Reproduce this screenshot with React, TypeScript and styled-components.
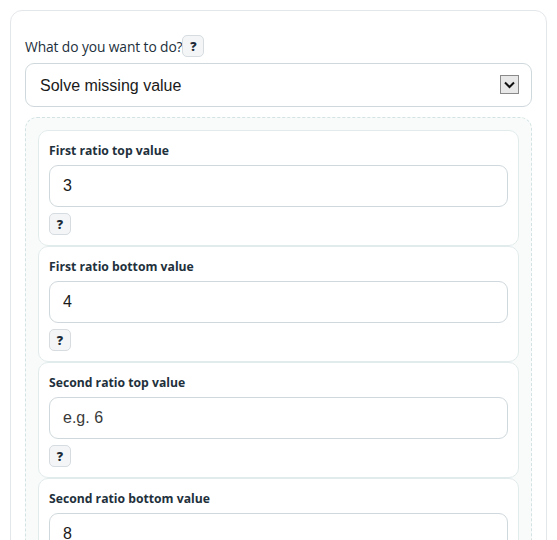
import React from "react";
import styled, { createGlobalStyle } from "styled-components";

const Global = createGlobalStyle`
  html, body { margin: 0; padding: 0; background: #ffffff; }
  body { font-family: "Open Sans", "Noto Sans", sans-serif; }
  * { box-sizing: border-box; }
`;

const Page = styled.div`
  padding: 10px 10px 0 10px;
`;

const Card = styled.div`
  background: #ffffff;
  border: 1px solid #e4e7ea;
  border-radius: 12px;
  padding: 24px 14px 40px 14px;
  height: 560px;
  overflow: hidden;
`;

const LabelRow = styled.div`
  display: flex;
  align-items: center;
  height: 22px;
  margin-bottom: 6px;
`;

const TopLabel = styled.label`
  font-family: "Open Sans", "Noto Sans", sans-serif;
  font-size: 13.8px;
  color: #22303c;
  letter-spacing: -0.1px;
  padding-top: 1px;
`;

const HelpRow = styled.div`
  display: flex;
  height: 22px;
`;

const HelpButton = styled.button`
  width: 22px;
  height: 22px;
  padding: 0;
  display: flex;
  align-items: center;
  justify-content: center;
  background: #f3f5f7;
  border: 1px solid #d6dce0;
  border-radius: 5px;
  font-family: "Open Sans", "Noto Sans", sans-serif;
  font-weight: 800;
  font-size: 12.5px;
  color: #1e2b38;
  cursor: pointer;
`;

const SelectWrap = styled.div`
  position: relative;
  margin-bottom: 10px;
`;

const Select = styled.select`
  display: block;
  width: 100%;
  height: 44px;
  appearance: none;
  -webkit-appearance: none;
  background: #ffffff;
  border: 1px solid #cfd8dc;
  border-radius: 9px;
  padding: 0 14px;
  font-family: "Liberation Sans", Arial, sans-serif;
  font-size: 16px;
  color: #1a1a1a;
  outline: none;
`;

const ArrowBox = styled.span`
  position: absolute;
  right: 13px;
  top: 12px;
  width: 19px;
  height: 19px;
  background: #e8e8e8;
  border: 1px solid #8a8a8a;
  display: flex;
  align-items: center;
  justify-content: center;
  pointer-events: none;
`;

const Group = styled.div`
  background: #f9fbfb;
  border: 1px dashed #d3e3e3;
  border-radius: 12px;
  padding: 12px;
`;

const Field = styled.div`
  background: #ffffff;
  border: 1px solid #e2ebeb;
  border-radius: 10px;
  padding: 11px 10px 10px 10px;
`;

const FieldLabel = styled.label`
  display: block;
  font-family: "Open Sans", "Noto Sans", sans-serif;
  font-weight: 700;
  font-size: 12.2px;
  line-height: 18px;
  color: #22303c;
  margin-bottom: 5px;
`;

const Input = styled.input`
  display: block;
  width: 100%;
  height: 42px;
  background: #ffffff;
  border: 1px solid #cfd8dc;
  border-radius: 9px;
  padding: 0 13px;
  font-family: "Liberation Sans", Arial, sans-serif;
  font-size: 16px;
  color: #1a1a1a;
  outline: none;
  margin-bottom: 6px;
  &::placeholder {
    color: #3a3a3a;
    opacity: 1;
  }
`;

type FieldDef = { label: string; value?: string; placeholder?: string };

const fields: FieldDef[] = [
  { label: "First ratio top value", value: "3" },
  { label: "First ratio bottom value", value: "4" },
  { label: "Second ratio top value", placeholder: "e.g. 6" },
  { label: "Second ratio bottom value", value: "8" },
];

export default function App() {
  return (
    <Page>
      <Global />
      <Card>
        <LabelRow>
          <TopLabel>What do you want to do?</TopLabel>
          <HelpButton type="button">?</HelpButton>
        </LabelRow>
        <SelectWrap>
          <Select defaultValue="solve">
            <option value="solve">Solve missing value</option>
            <option value="check">Check equivalence</option>
            <option value="simplify">Simplify ratio</option>
          </Select>
          <ArrowBox>
            <svg width="11" height="8" viewBox="0 0 11 8">
              <path d="M1 1.5 L5.5 6 L10 1.5" fill="none" stroke="#111" strokeWidth="2" />
            </svg>
          </ArrowBox>
        </SelectWrap>
        <Group>
          {fields.map((f) => (
            <Field key={f.label}>
              <FieldLabel>{f.label}</FieldLabel>
              <Input
                defaultValue={f.value}
                placeholder={f.placeholder}
                inputMode="decimal"
              />
              <HelpRow>
                <HelpButton type="button">?</HelpButton>
              </HelpRow>
            </Field>
          ))}
        </Group>
      </Card>
    </Page>
  );
}
